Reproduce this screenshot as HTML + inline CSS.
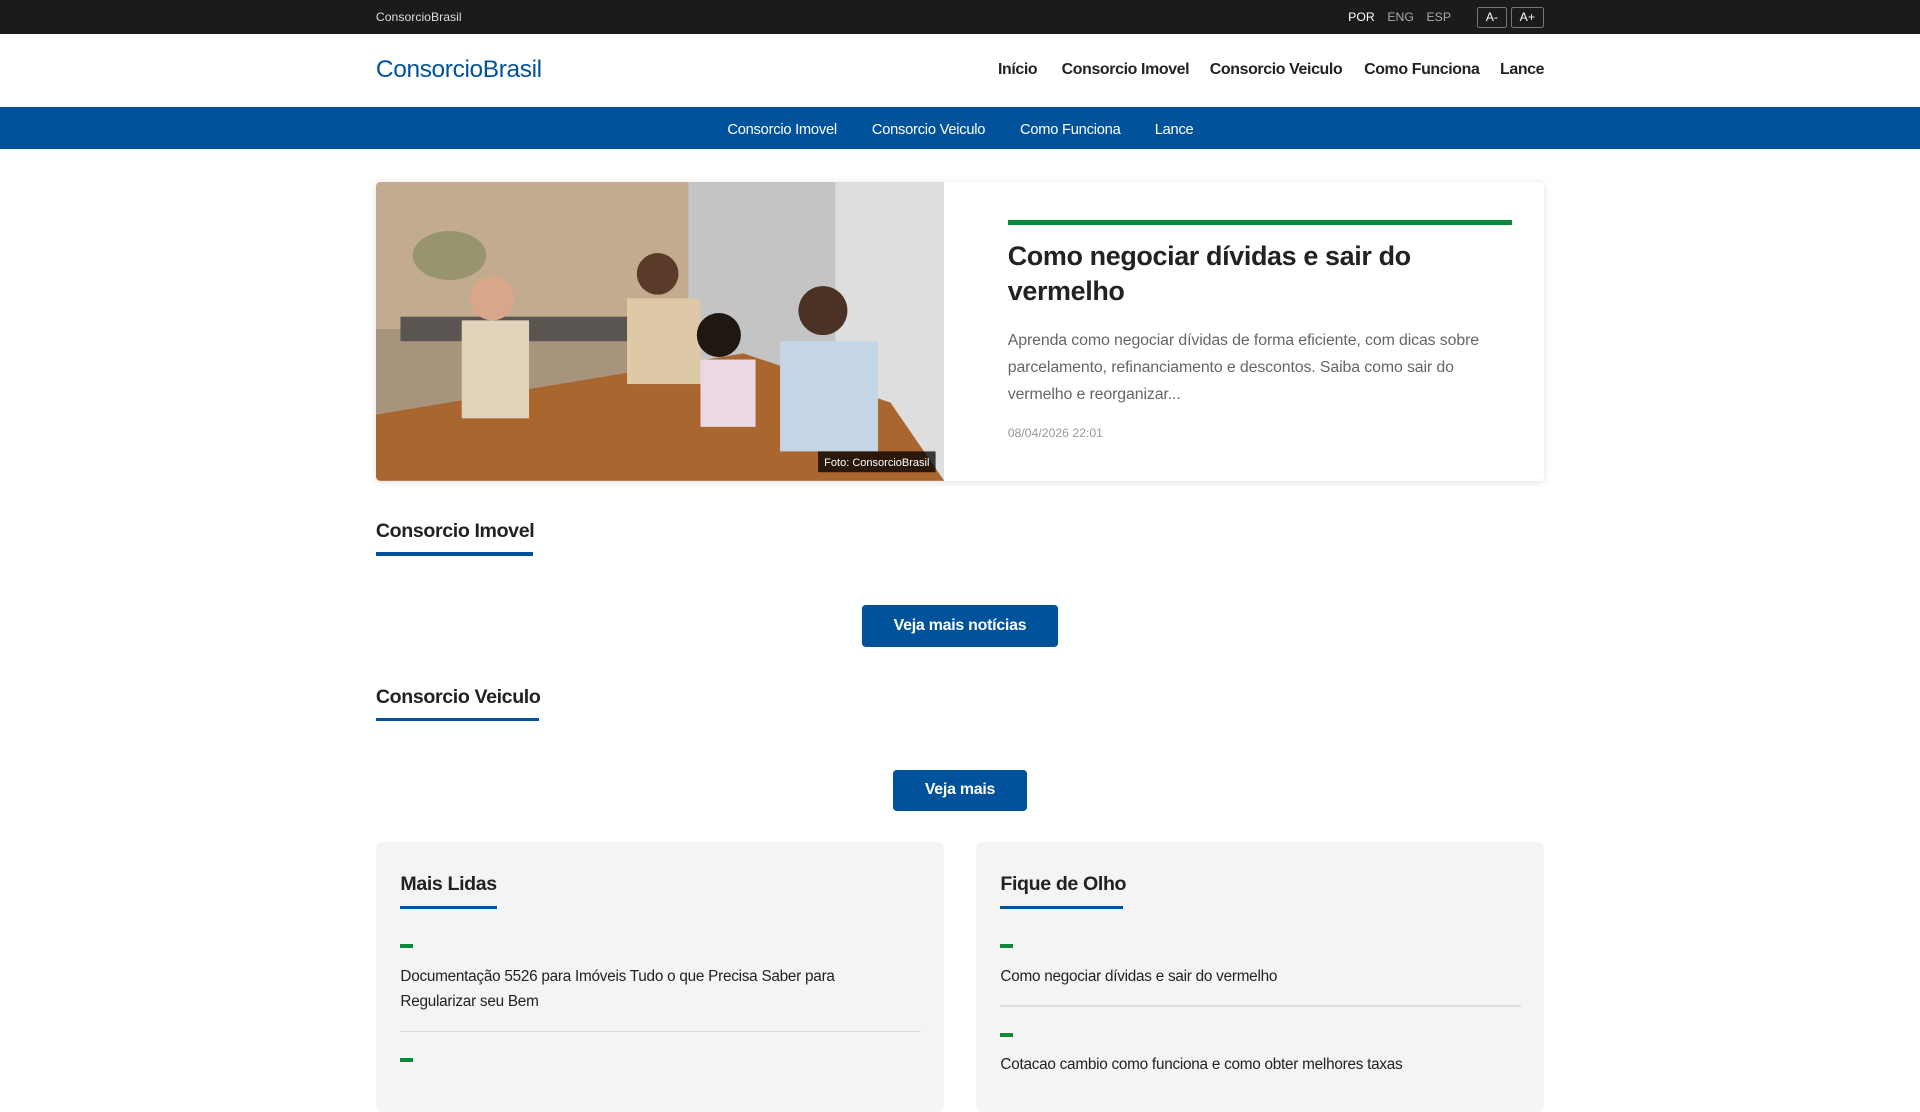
<!DOCTYPE html>
<html><head><meta charset="utf-8"><style>
html,body{margin:0;padding:0}
body{width:1568px;height:882px;overflow:hidden;zoom:1.22449;font-family:"Liberation Sans",Arial,sans-serif;background:#fff;color:#222}
.c{position:absolute}
.top{position:absolute;left:0;top:0;width:1568px;height:28px;background:#1b1b1b;color:#ddd;font-size:10px}
.hdr{position:absolute;left:0;top:28px;width:1568px;height:59px;background:#fff;border-bottom:1px solid #eee}
.hdr b{position:absolute;top:22px;font-size:13px;letter-spacing:-0.3px}
.nav{position:absolute;left:0;top:87px;width:1568px;height:35px;background:#00539b;color:#fff;font-size:12px;letter-spacing:-0.2px}
.sec{font-size:16px;font-weight:bold;color:#222;letter-spacing:-0.3px}
.btn{position:absolute;background:#00539b;color:#fff;font-weight:bold;font-size:13px;text-align:center;border-radius:3px;letter-spacing:-0.2px}
.box{position:absolute;background:#f4f4f4;border-radius:6px}
.it{font-size:12.5px;color:#222;line-height:21px;letter-spacing:-0.2px}
.dash{width:10px;height:3px;background:#0a8a3a;position:absolute}
</style></head><body>
<div class="top">
<span class="c" style="left:307px;top:8px">ConsorcioBrasil</span>
<span class="c" style="left:1101px;top:8px;color:#fff">POR</span>
<span class="c" style="left:1133px;top:8px;color:#aaa">ENG</span>
<span class="c" style="left:1165px;top:8px;color:#aaa">ESP</span>
<span class="c" style="left:1206px;top:6px;width:23px;height:15px;border:1px solid #777;border-radius:2px;text-align:center;line-height:15px;color:#fff">A-</span>
<span class="c" style="left:1234px;top:6px;width:25px;height:15px;border:1px solid #777;border-radius:2px;text-align:center;line-height:15px;color:#fff">A+</span>
</div>
<div class="hdr">
<span class="c" style="left:307px;top:18px;font-size:20px;color:#00539b;letter-spacing:-0.3px">ConsorcioBrasil</span>
<b style="left:815px">Início</b>
<b style="left:867px">Consorcio Imovel</b>
<b style="left:988px">Consorcio Veiculo</b>
<b style="left:1114px">Como Funciona</b>
<b style="left:1225px">Lance</b>
</div>
<div class="nav">
<span class="c" style="left:594px;top:13px">Consorcio Imovel</span>
<span class="c" style="left:712px;top:13px">Consorcio Veiculo</span>
<span class="c" style="left:833px;top:13px">Como Funciona</span>
<span class="c" style="left:943px;top:13px">Lance</span>
</div>
<div class="c" style="left:307px;top:149px;width:954px;height:244px;box-shadow:0 1px 6px rgba(0,0,0,.12);border-radius:4px;overflow:hidden;background:#fff">
<svg width="464" height="244" style="position:absolute;left:0;top:0">
<rect width="464" height="244" fill="#a8937c"/>
<rect x="0" y="0" width="255" height="120" fill="#c2ab8e"/>
<rect x="255" y="0" width="120" height="200" fill="#c4c4c4"/>
<rect x="375" y="0" width="89" height="244" fill="#dedede"/>
<rect x="20" y="110" width="200" height="20" fill="#5a5550"/>
<ellipse cx="60" cy="60" rx="30" ry="20" fill="#98946e"/>
<polygon points="0,190 300,140 420,180 464,244 0,244" fill="#a9662f"/>
<circle cx="95" cy="95" r="18" fill="#d9a68a"/><rect x="70" y="113" width="55" height="80" fill="#e0d3ba"/>
<circle cx="230" cy="75" r="17" fill="#5a3b2a"/><rect x="205" y="95" width="60" height="70" fill="#ddc9a5"/>
<circle cx="280" cy="125" r="18" fill="#1f1812"/><rect x="265" y="145" width="45" height="55" fill="#ecd8e2"/>
<circle cx="365" cy="105" r="20" fill="#4b3225"/><rect x="330" y="130" width="80" height="90" fill="#c4d6e6"/>
<rect x="361" y="220" width="96" height="17" fill="rgba(0,0,0,.75)"/>
<text x="366" y="232" fill="#fff" font-size="9" font-family="Liberation Sans">Foto: ConsorcioBrasil</text>
</svg>
<div class="c" style="left:516px;top:31px;width:412px;height:4px;background:#0a8a3a"></div>
<div class="c" style="left:516px;top:46px;width:412px;font-size:22px;font-weight:bold;line-height:29px;color:#222;letter-spacing:-0.3px">Como negociar dívidas e sair do vermelho</div>
<div class="c" style="left:516px;top:119px;width:412px;font-size:13px;line-height:22px;color:#666;letter-spacing:-0.1px">Aprenda como negociar dívidas de forma eficiente, com dicas sobre parcelamento, refinanciamento e descontos. Saiba como sair do vermelho e reorganizar...</div>
<div class="c" style="left:516px;top:199px;font-size:10px;color:#999">08/04/2026 22:01</div>
</div>
<span class="c sec" style="left:307px;top:425px">Consorcio Imovel</span>
<div class="c" style="left:307px;top:451px;width:128px;height:3px;background:#00539b"></div>
<div class="btn" style="left:704px;top:494px;width:160px;height:34px;line-height:34px">Veja mais notícias</div>
<span class="c sec" style="left:307px;top:560px">Consorcio Veiculo</span>
<div class="c" style="left:307px;top:586px;width:133px;height:3px;background:#00539b"></div>
<div class="btn" style="left:729px;top:629px;width:110px;height:33px;line-height:33px">Veja mais</div>
<div class="box" style="left:307px;top:688px;width:464px;height:220px">
<span class="c sec" style="left:20px;top:25px">Mais Lidas</span>
<div class="c" style="left:20px;top:52px;width:79px;height:2px;background:#00539b"></div>
<div class="dash" style="left:20px;top:83px"></div>
<div class="c it" style="left:20px;top:99px;width:395px">Documentação 5526 para Imóveis Tudo o que Precisa Saber para Regularizar seu Bem</div>
<div class="c" style="left:20px;top:154px;width:425px;height:1px;background:#ddd"></div>
<div class="dash" style="left:20px;top:176px"></div>
</div>
<div class="box" style="left:797px;top:688px;width:464px;height:220px">
<span class="c sec" style="left:20px;top:25px">Fique de Olho</span>
<div class="c" style="left:20px;top:52px;width:100px;height:2px;background:#00539b"></div>
<div class="dash" style="left:20px;top:83px"></div>
<div class="c it" style="left:20px;top:99px;width:420px">Como negociar dívidas e sair do vermelho</div>
<div class="c" style="left:20px;top:133px;width:425px;height:1px;background:#ddd"></div>
<div class="dash" style="left:20px;top:156px"></div>
<div class="c it" style="left:20px;top:171px;width:420px">Cotacao cambio como funciona e como obter melhores taxas</div>
</div>
</body></html>
